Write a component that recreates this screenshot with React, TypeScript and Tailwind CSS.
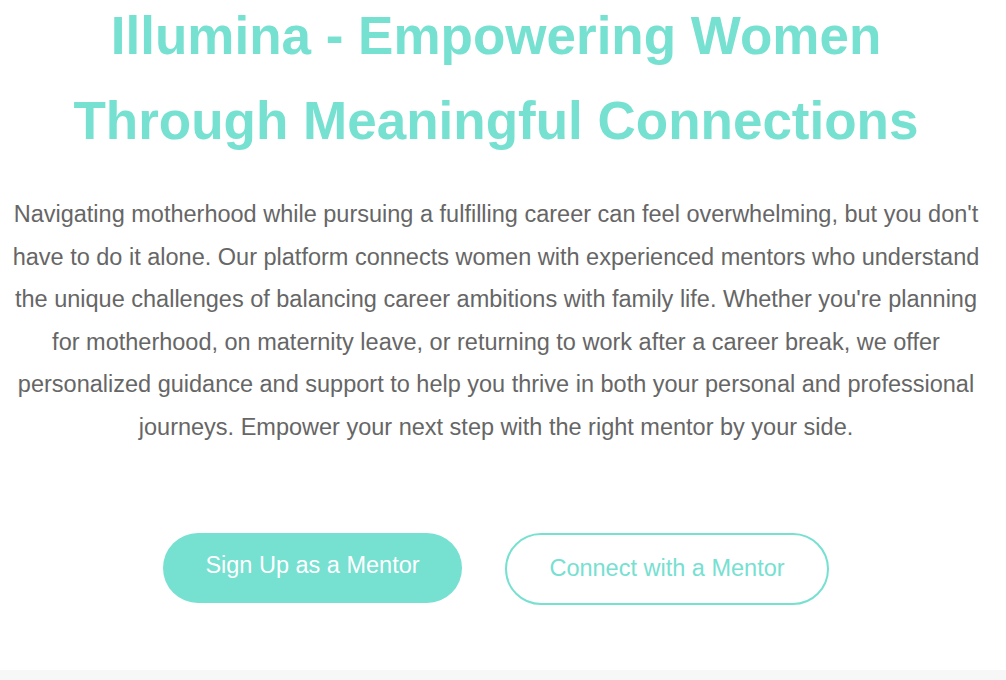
export default function App() {
  return (
    <div className="min-h-[680px] bg-white font-['Liberation_Sans',Arial,sans-serif] flex flex-col">
      <section className="flex flex-col items-center pl-[5px] pr-[19px] -mt-[7px]">
        {/* Hero heading */}
        <h1 className="text-center text-[53px] leading-[85px] font-bold text-[#76e0d1] max-w-[900px]">
          Illumina - Empowering Women Through Meaningful Connections
        </h1>

        <p className="mt-[30px] text-center text-[23.5px] leading-[42.5px] text-[#666666]">
          Navigating motherhood while pursuing a fulfilling career can feel overwhelming, but you don't have to do it alone.
          Our platform connects women with experienced mentors who understand the unique challenges of balancing career
          ambitions with family life. Whether you're planning for motherhood, on maternity leave, or returning to work after a
          career break, we offer personalized guidance and support to help you thrive in both your personal and professional
          journeys. Empower your next step with the right mentor by your side.
        </p>

        {/* Actions */}
        <div className="mt-[82px] flex items-center gap-[43px]">
          <button className="h-[70px] w-[299px] rounded-full bg-[#76e0d1] text-white text-[23.5px] pb-[4px]">
            Sign Up as a Mentor
          </button>
          <button className="h-[72px] w-[324px] rounded-full border-2 border-[#76e0d1] bg-white text-[#76e0d1] text-[23.5px] mt-[3px]">
            Connect with a Mentor
          </button>
        </div>
      </section>
      <div className="mt-auto h-[10px] bg-[#f7f7f7]" />
    </div>
  );
}
